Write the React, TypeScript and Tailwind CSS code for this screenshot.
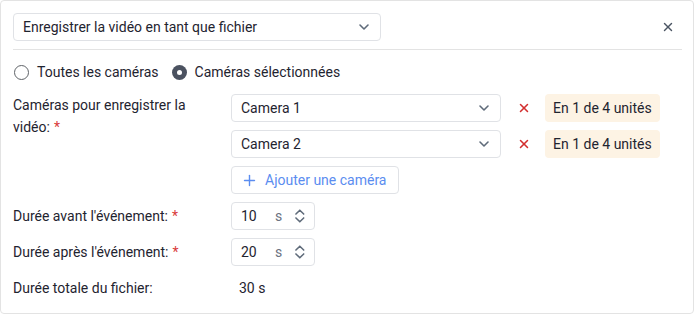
import { Plus, X } from "lucide-react";

function Chevron() {
  return (
    <svg width="12" height="8" viewBox="0 0 12 8" className="text-[#5f6b7a]">
      <path d="M2 2l4 4 4-4" fill="none" stroke="currentColor" strokeWidth="1.6" strokeLinecap="round" strokeLinejoin="round" />
    </svg>
  );
}

function Spinner() {
  return (
    <svg width="12" height="18" viewBox="0 0 12 18" className="text-[#5f6b7a]">
      <path d="M2 7l4-4 4 4M2 11l4 4 4-4" fill="none" stroke="currentColor" strokeWidth="1.6" strokeLinecap="round" strokeLinejoin="round" />
    </svg>
  );
}

function Req() {
  return <span className="text-[#d93a3a] ml-1">*</span>;
}

function Select({ label, w }: { label: string; w: string }) {
  return (
    <div className={`${w} h-[28px] flex items-center justify-between pl-[9px] pr-[10px] border border-[#e0e2e6] rounded-[4px]`}>
      <span>{label}</span>
      <Chevron />
    </div>
  );
}

function Duration({ value }: { value: string }) {
  return (
    <div className="w-[84px] h-[28px] flex items-center border border-[#e0e2e6] rounded-[4px] pl-[9px] pr-[8px]">
      <span className="w-[35px]">{value}</span>
      <span className="text-[#6b7280] w-[20px]">s</span>
      <Spinner />
    </div>
  );
}

const cameras = ["Camera 1", "Camera 2"];

export default function App() {
  return (
    <div
      className="w-[694px] h-[314px] bg-white border border-[#e3e3e3] rounded-[4px] px-[12px] pt-[12px] text-[14px] text-[#1f2430]"
      style={{ fontFamily: "Roboto, 'Liberation Sans', sans-serif" }}
    >
      {/* Header */}
      <div className="flex items-center justify-between">
        <Select label="Enregistrer la vidéo en tant que fichier" w="w-[368px]" />
        <X className="w-[14px] h-[14px] mr-[6px] text-[#4b5563]" strokeWidth={2.4} />
      </div>
      <div className="mt-[8px] border-t border-[#e3e3e3] w-[669px]" />

      {/* Radios */}
      <div className="mt-[12px] h-[20px] flex items-center">
        <div className="flex items-center">
          <span className="w-[15px] h-[15px] rounded-full border border-[#5f6368] ml-[1px]" />
          <span className="ml-[8px]">Toutes les caméras</span>
        </div>
        <div className="flex items-center ml-[13px]">
          <span className="w-[15px] h-[15px] rounded-full bg-[#4b5260] flex items-center justify-center">
            <span className="w-[5px] h-[5px] rounded-full bg-white" />
          </span>
          <span className="ml-[8px]">Caméras sélectionnées</span>
        </div>
      </div>

      {/* Cameras */}
      <div className="mt-[12px] flex">
        <div className="w-[218px] leading-[22px] pr-[18px]">
          Caméras pour enregistrer la vidéo:<Req />
        </div>
        <div className="flex flex-col gap-[8px]">
          {cameras.map((c) => (
            <div key={c} className="flex items-center">
              <Select label={c} w="w-[270px]" />
              <X className="w-[14px] h-[14px] ml-[16px] text-[#d32f2f]" strokeWidth={2.6} />
              <span className="ml-[14px] h-[28px] px-[8px] flex items-center bg-[#fdf3e4] rounded-[4px]">
                En 1 de 4 unités
              </span>
            </div>
          ))}
          <div className="w-[168px] h-[28px] flex items-center gap-[7px] pl-[9px] border border-[#e0e2e6] rounded-[4px] text-[#5b8df0]">
            <Plus className="w-[17px] h-[17px]" strokeWidth={2} />
            <span>Ajouter une caméra</span>
          </div>
        </div>
      </div>

      {/* Durations */}
      <div className="mt-[8px] flex flex-col gap-[8px]">
        <div className="flex items-center h-[28px]">
          <div className="w-[218px]">
            Durée avant l'événement:<Req />
          </div>
          <Duration value="10" />
        </div>
        <div className="flex items-center h-[28px]">
          <div className="w-[218px]">
            Durée après l'événement:<Req />
          </div>
          <Duration value="20" />
        </div>
        <div className="flex items-center h-[28px]">
          <div className="w-[226px]">Durée totale du fichier:</div>
          <span>30 s</span>
        </div>
      </div>
    </div>
  );
}
